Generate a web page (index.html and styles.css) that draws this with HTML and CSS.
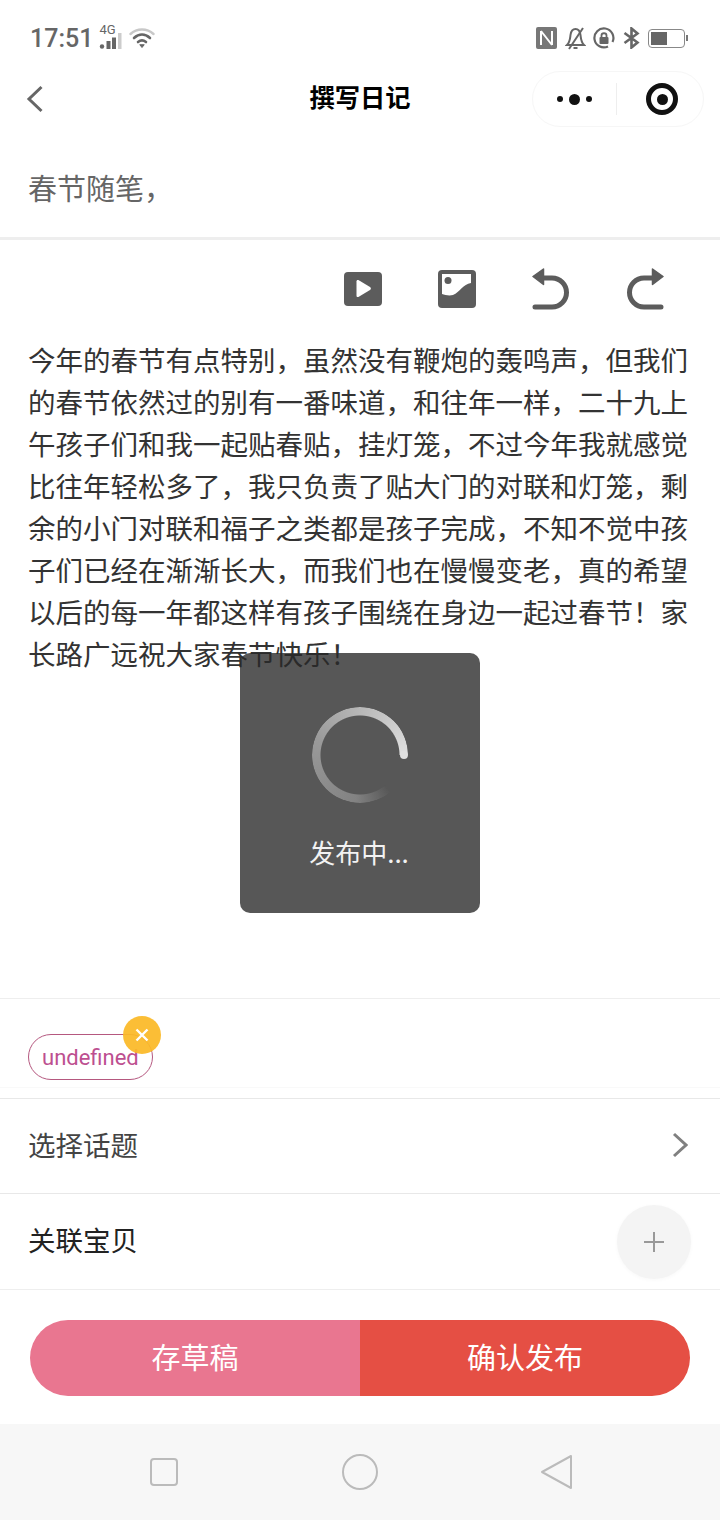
FILE: index.html
```html
<!DOCTYPE html>
<html lang="zh-CN">
<head>
    <meta charset="UTF-8">
    <meta name="viewport" content="width=device-width, initial-scale=1.0">
    <title>撰写日记</title>
    <link rel="stylesheet" href="styles.css">
</head>
<body>
    <div class="phone">
        <div class="status-bar">
            <div class="status-left">
                <span class="time">17:51</span>
                <span class="net">
                    <span class="net-label">4G</span>
                    <svg width="24" height="16" viewBox="0 0 24 16"><circle cx="3" cy="13.500" r="2.200" fill="#666"/><rect x="7.500" y="8" width="4" height="8" fill="#666"/><rect x="13" y="4.500" width="4" height="11.500" fill="#666"/><rect x="19" y="0" width="3.500" height="16" fill="#ccc"/></svg>
                </span>
                <svg class="wifi" width="26" height="22" viewBox="0 0 26 22" fill="none" stroke-linecap="round"><path d="M1.500 7 C8 1 18 1 24.500 7" stroke="#c8c8c8" stroke-width="2.400"/><path d="M5 11 C10 6.500 16 6.500 21 11" stroke="#666" stroke-width="2.600"/><path d="M9 15 C11.500 13 14.500 13 17 15" stroke="#666" stroke-width="2.600"/><path d="M11 18 L13 20.500 L15 18 Z" fill="#666" stroke="#666"/></svg>
            </div>
            <div class="status-right">
                <svg width="21" height="22" viewBox="0 0 21 22"><rect width="21" height="22" rx="2" fill="#777"/><path d="M5 4 V18 M16 4 V18 M5 4 L16 18" stroke="#fff" stroke-width="2" fill="none"/></svg>
                <svg width="21" height="24" viewBox="0 0 21 24" fill="none" stroke="#666" stroke-width="2"><path d="M2 19 C5 16 5 13 5.500 9 C6 5 8 3 10.500 3 C13 3 15 5 15.500 9 C16 13 16 16 19 19 Z"/><path d="M8.500 22 H12.500"/><path d="M18 2 L4 23"/></svg>
                <svg width="22" height="22" viewBox="0 0 22 22" fill="none"><path d="M19.500 15 A9.500 9.500 0 1 0 15 19.500" stroke="#666" stroke-width="2.200"/><rect x="6.500" y="10" width="9" height="7" rx="1" fill="#666"/><path d="M8.500 10 V8.500 C8.500 5.500 13.500 5.500 13.500 8.500 V10" stroke="#666" stroke-width="1.800"/></svg>
                <svg width="17" height="22" viewBox="0 0 17 22" fill="none" stroke="#666" stroke-width="2.600"><path d="M1.500 6 L14.500 15.500 L8.500 20.500 V1.500 L14.500 6.500 L1.500 16"/></svg>
                <span class="battery"><span class="battery-level"></span></span>
            </div>
        </div>

        <div class="nav-bar">
            <svg class="nav-back" width="18" height="28" viewBox="0 0 18 28" fill="none"><path d="M15.500 2 L3 14 L15.500 26" stroke="#666" stroke-width="3"/></svg>
            <h1 class="nav-title">撰写日记</h1>
            <div class="capsule">
                <div class="capsule-more">
                    <span class="dot"></span><span class="dot big"></span><span class="dot"></span>
                </div>
                <div class="capsule-line"></div>
                <div class="capsule-close"><span class="close-inner"></span></div>
            </div>
        </div>

        <div class="title-row">春节随笔，</div>

        <div class="toolbar">
            <svg width="38" height="34" viewBox="0 0 38 34"><rect width="38" height="34" rx="4" fill="#5c5c5c"/><path d="M12.500 9.500 C12.500 8 13.500 7.500 14.800 8.200 L26 15 C27.200 15.800 27.200 17.200 26 18 L14.800 24.800 C13.500 25.500 12.500 25 12.500 23.500 Z" fill="#fff"/></svg>
            <svg width="38" height="38" viewBox="0 0 38 38"><rect width="38" height="38" rx="4" fill="#5c5c5c"/><path d="M4 4 H33 V13 C25 14 22 22 15 25 C11 26 7 25 4 24 Z" fill="#fff"/><circle cx="10" cy="10.500" r="3.500" fill="#5c5c5c"/></svg>
            <svg width="38" height="44" viewBox="0 0 38 44" fill="none"><path d="M3 40 H20 A14.500 14.500 0 0 0 20 11 H10" stroke="#5c5c5c" stroke-width="5" stroke-linecap="round"/><path d="M1 9.500 L11.500 2 V17.500 Z" fill="#5c5c5c" stroke="#5c5c5c" stroke-width="1.500" stroke-linejoin="round"/></svg>
            <svg width="38" height="44" viewBox="0 0 38 44" fill="none"><path d="M35 40 H18 A14.500 14.500 0 0 1 18 11 H28" stroke="#5c5c5c" stroke-width="5" stroke-linecap="round"/><path d="M37 9.500 L26.500 2 V17.500 Z" fill="#5c5c5c" stroke="#5c5c5c" stroke-width="1.500" stroke-linejoin="round"/></svg>
        </div>

        <div class="content">今年的春节有点特别，虽然没有鞭炮的轰鸣声，但我们的春节依然过的别有一番味道，和往年一样，二十九上午孩子们和我一起贴春贴，挂灯笼，不过今年我就感觉比往年轻松多了，我只负责了贴大门的对联和灯笼，剩余的小门对联和福子之类都是孩子完成，不知不觉中孩子们已经在渐渐长大，而我们也在慢慢变老，真的希望以后的每一年都这样有孩子围绕在身边一起过春节！家长路广远祝大家春节快乐！</div>

        <div class="tag-section">
            <div class="tag-row">
                <span class="tag">undefined
                    <span class="tag-remove">
                        <svg width="14" height="14" viewBox="0 0 14 14"><path d="M1.500 1.500 L12.500 12.500 M12.500 1.500 L1.500 12.500" stroke="#fff" stroke-width="2.400"/></svg>
                    </span>
                </span>
            </div>
        </div>

        <div class="row">
            <span>选择话题</span>
            <svg class="row-arrow" width="16" height="26" viewBox="0 0 16 26" fill="none"><path d="M2 2 L14 13 L2 24" stroke="#808080" stroke-width="3"/></svg>
        </div>
        <div class="row row-last">
            <span class="row-dark">关联宝贝</span>
            <span class="add-btn">
                <svg width="20" height="20" viewBox="0 0 20 20"><path d="M10 0 V20 M0 10 H20" stroke="#999" stroke-width="2"/></svg>
            </span>
        </div>

        <div class="actions">
            <div class="btn-group">
                <div class="btn btn-draft">存草稿</div>
                <div class="btn btn-publish">确认发布</div>
            </div>
        </div>

        <div class="system-nav">
            <svg width="28" height="28" viewBox="0 0 28 28" fill="none"><rect x="1" y="1" width="26" height="26" rx="3" stroke="#bbb" stroke-width="2"/></svg>
            <svg width="36" height="36" viewBox="0 0 36 36" fill="none"><circle cx="18" cy="18" r="17" stroke="#bbb" stroke-width="2"/></svg>
            <svg width="32" height="36" viewBox="0 0 32 36" fill="none"><path d="M30 2 V34 L1 18 Z" stroke="#bbb" stroke-width="2" stroke-linejoin="round"/></svg>
        </div>

        <!-- loading toast sits over the page -->
        <div class="toast">
            <div class="spinner"></div>
            <div class="toast-text">发布中...</div>
        </div>
    </div>
</body>
</html>
```

FILE: styles.css
```css
* {
    box-sizing: border-box;
}

body {
    margin: 0;
    font-family: "Noto Sans CJK SC", "Noto Sans", sans-serif;
    background-color: #fff;
}

.phone {
    position: relative;
    width: 720px;
    height: 1520px;
    display: flex;
    flex-direction: column;
    overflow: hidden;
    background-color: #fff;
}

/* status bar */
.status-bar {
    height: 70px;
    padding: 6px 35px 0 30px;
    display: flex;
    align-items: center;
    justify-content: space-between;
}

.status-left {
    display: flex;
    align-items: center;
    gap: 6px;
}

.time {
    font-family: Roboto, sans-serif;
    font-size: 25px;
    font-weight: 500;
    color: #666;
}

.net {
    position: relative;
    width: 24px;
    height: 22px;
    display: flex;
    align-items: flex-end;
}

.net-label {
    position: absolute;
    top: -5px;
    left: 0;
    font-family: Roboto, sans-serif;
    font-size: 13px;
    color: #666;
}

.status-right {
    display: flex;
    align-items: center;
    gap: 7.500px;
}

.battery {
    position: relative;
    width: 37px;
    height: 19px;
    padding: 2px;
    margin-left: 1px;
    border: 1px solid #888;
    border-radius: 4px;
}

.battery::after {
    content: "";
    position: absolute;
    top: 5px;
    right: -4px;
    width: 2px;
    height: 6px;
    background-color: #777;
}

.battery-level {
    display: block;
    width: 16px;
    height: 100%;
    background-color: #666;
}

/* nav bar */
.nav-bar {
    position: relative;
    height: 58px;
    padding: 0 16px 0 26px;
    display: flex;
    align-items: center;
    justify-content: space-between;
}

.nav-title {
    position: absolute;
    left: 0;
    right: 0;
    top: 6px;
    margin: 0;
    text-align: center;
    font-size: 25.300px;
    line-height: 40px;
    font-weight: 700;
    color: #000;
}

.capsule {
    width: 172px;
    height: 56px;
    display: flex;
    align-items: center;
    border: 1px solid #f6f6f6;
    border-radius: 28px;
}

.capsule-more {
    flex: 1;
    display: flex;
    align-items: center;
    justify-content: center;
    gap: 6px;
}

.dot {
    width: 6px;
    height: 6px;
    border-radius: 50%;
    background-color: #111;
}

.dot.big {
    width: 11px;
    height: 11px;
}

.capsule-line {
    width: 1px;
    height: 32px;
    background-color: #eee;
}

.capsule-close {
    width: 86px;
    padding-left: 4px;
    display: flex;
    justify-content: center;
}

.close-inner {
    width: 32px;
    height: 32px;
    border: 5px solid #111;
    border-radius: 50%;
    display: flex;
    align-items: center;
    justify-content: center;
}

.close-inner::after {
    content: "";
    width: 11px;
    height: 11px;
    border-radius: 50%;
    background-color: #111;
}

/* title and toolbar */
.title-row {
    height: 112px;
    padding: 8px 28px 0;
    display: flex;
    align-items: center;
    font-size: 29px;
    color: #666;
    border-bottom: 3px solid #eee;
}

.toolbar {
    height: 97px;
    padding: 0 56px 0 0;
    display: flex;
    align-items: center;
    justify-content: flex-end;
    gap: 56px;
}

.content {
    flex: 1;
    padding: 1px 28px 0;
    font-size: 27.500px;
    line-height: 42px;
    color: #333;
    word-break: break-all;
}

/* tag */
.tag-section {
    height: 100px;
    border-top: 1px solid #eee;
    padding-top: 35px;
}

.tag-row {
    height: 54px;
    padding-left: 28px;
    border-bottom: 1px solid #f9f9f9;
}

.tag {
    position: relative;
    display: inline-flex;
    align-items: center;
    height: 46px;
    padding: 0 13px;
    font-family: Roboto, sans-serif;
    font-size: 22px;
    color: #bd4f90;
    border: 1px solid #b5587f;
    border-radius: 23px;
}

.tag-remove {
    position: absolute;
    top: -19px;
    right: -9px;
    width: 38px;
    height: 38px;
    display: flex;
    align-items: center;
    justify-content: center;
    border-radius: 50%;
    background-color: rgba(251, 185, 39, 0.93);
}

/* rows */
.row {
    height: 95px;
    padding: 0 32px 5px 28px;
    display: flex;
    align-items: center;
    justify-content: space-between;
    font-size: 27.500px;
    color: #444;
    border-top: 1px solid #e8e8e8;
}

.row-last {
    height: 96px;
}

.row-dark {
    color: #222;
}

.row-arrow {
    margin-top: 2px;
}

.add-btn {
    width: 74px;
    height: 74px;
    margin: 5px -3px 0 0;
    display: flex;
    align-items: center;
    justify-content: center;
    border-radius: 50%;
    background-color: #f4f4f4;
    box-shadow: 0 1px 4px rgba(0, 0, 0, 0.03);
}

/* bottom buttons */
.actions {
    height: 135px;
    padding: 30px 30px 0;
    border-top: 1px solid #eee;
}

.btn-group {
    height: 76px;
    display: flex;
    border-radius: 38px;
    overflow: hidden;
}

.btn {
    flex: 1;
    padding-bottom: 5px;
    display: flex;
    align-items: center;
    justify-content: center;
    font-size: 29px;
    color: #fff;
}

.btn-draft {
    background-color: #e97690;
}

.btn-publish {
    background-color: #e54f44;
}

/* android nav */
.system-nav {
    height: 96px;
    padding: 0 147px 0 150px;
    display: flex;
    align-items: center;
    justify-content: space-between;
    background-color: #f7f7f7;
}

/* toast */
.toast {
    position: absolute;
    top: 653px;
    left: 240px;
    width: 240px;
    height: 260px;
    display: flex;
    flex-direction: column;
    align-items: center;
    padding-top: 54px;
    border-radius: 10px;
    background-color: rgba(40, 40, 40, 0.78);
}

.spinner {
    position: relative;
    width: 96px;
    height: 96px;
    border-radius: 50%;
    background: conic-gradient(from 90deg, rgba(130, 130, 130, 0) 0deg, rgba(130, 130, 130, 0) 50deg, #828282 95deg, #9a9a9a 200deg, #c0c0c0 290deg, #e0e0e0 360deg);
    -webkit-mask: radial-gradient(circle, transparent 39px, #000 40px);
    mask: radial-gradient(circle, transparent 39px, #000 40px);
}

.spinner::after {
    content: "";
    position: absolute;
    top: 44px;
    right: 0;
    width: 8px;
    height: 8px;
    border-radius: 50%;
    background-color: #e0e0e0;
}

.toast-text {
    margin-top: 19px;
    margin-right: 2px;
    font-size: 26px;
    line-height: 60px;
    color: #f2f2f2;
}
```
